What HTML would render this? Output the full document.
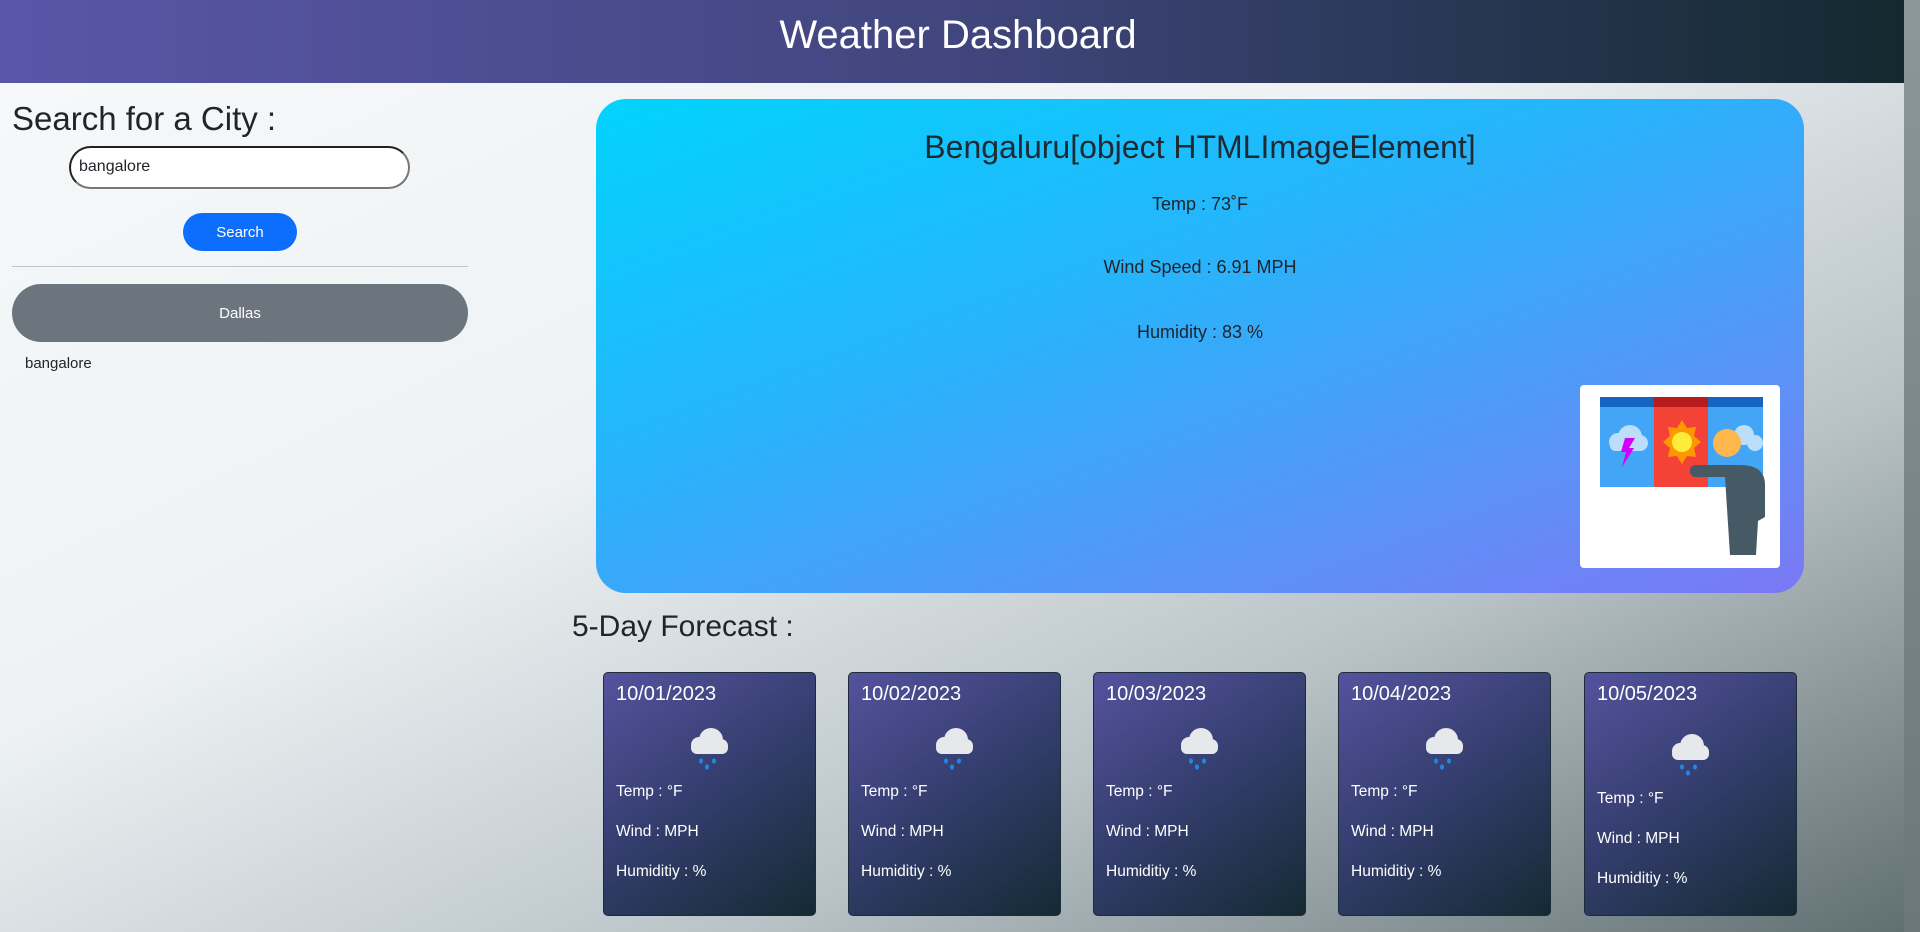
<!DOCTYPE html>
<html><head><meta charset="utf-8"><style>
*{margin:0;padding:0;box-sizing:border-box}
body{width:1920px;height:932px;overflow:hidden;position:relative;font-family:"Liberation Sans",sans-serif;background:linear-gradient(155deg,#f7f9fa 0%,#eef2f4 40%,#b9c3c7 70%,#5f6e71 100%);color:#212529}
.a{position:absolute}
#hdr{left:0;top:0;width:1904px;height:83px;background:linear-gradient(90deg,#5a56a8,#41467e 50%,#13292f);color:#fff;font-size:40px;text-align:center;line-height:70px;padding-left:12px}
#sb{left:1904px;top:0;width:16px;height:932px;background:linear-gradient(#8a979b,#6a777b)}
.c{display:flex;align-items:center;justify-content:center;text-align:center}
.card{width:213px;height:244px;border:1px solid #1c2c38;border-radius:5px;background:linear-gradient(145deg,#55529e,#333d6c 50%,#152a33);color:#fff;top:672px}
.card .d{position:absolute;left:12px;top:10px;font-size:20px}
.card .t{position:absolute;left:12px;font-size:15.5px}
.card svg{position:absolute;left:80px;top:50px}
</style></head><body>
<div id="hdr" class="a">Weather Dashboard</div>
<div id="sb" class="a"></div>
<div class="a" style="left:12px;top:100px;font-size:33px">Search for a City :</div>
<div class="a" style="left:69px;top:146px;width:341px;height:43px;border:2px solid #222;border-radius:22px;background:#fff;font-size:16px;padding:10px 0 0 8px;border-bottom-color:#777;border-right-color:#777">bangalore</div>
<div class="a c" style="left:183px;top:213px;width:114px;height:38px;background:#0d6efd;border-radius:19px;color:#fff;font-size:15px">Search</div>
<div class="a" style="left:12px;top:266px;width:456px;height:1px;background:#c0c4c8"></div>
<div class="a c" style="left:12px;top:284px;width:456px;height:58px;background:#6c757d;border-radius:29px;color:#fff;font-size:15px">Dallas</div>
<div class="a" style="left:25px;top:355px;font-size:15px">bangalore</div>

<div class="a" style="left:596px;top:99px;width:1208px;height:494px;border-radius:30px;background:linear-gradient(160deg,#02d3fd 0%,#27b4fb 40%,#5a93f8 75%,#7b78f4 100%)">
<div class="a" style="left:0;width:1208px;top:30px;text-align:center;font-size:32px;color:#1f2a33">Bengaluru[object HTMLImageElement]</div>
<div class="a" style="left:0;width:1208px;top:95px;text-align:center;font-size:18px">Temp : 73˚F</div>
<div class="a" style="left:0;width:1208px;top:158px;text-align:center;font-size:18px">Wind Speed : 6.91 MPH</div>
<div class="a" style="left:0;width:1208px;top:223px;text-align:center;font-size:18px">Humidity : 83 %</div>
<div class="a" style="left:984px;top:286px;width:200px;height:183px;background:#fff;border-radius:4px;overflow:hidden">
<svg width="200" height="183" viewBox="0 0 200 183">
<rect x="20" y="12" width="54" height="90" fill="#42a5f5"/><rect x="74" y="12" width="54" height="90" fill="#f44336"/><rect x="128" y="12" width="55" height="90" fill="#42a5f5"/>
<rect x="20" y="12" width="54" height="10" fill="#1565c0"/><rect x="74" y="12" width="54" height="10" fill="#b71c1c"/><rect x="128" y="12" width="55" height="10" fill="#1565c0"/>
<g fill="#bbdefb"><circle cx="38" cy="57" r="9"/><circle cx="50" cy="52" r="12"/><circle cx="60" cy="58" r="8"/><rect x="30" y="56" width="36" height="10" rx="5"/>
<circle cx="164" cy="50" r="10"/><circle cx="175" cy="58" r="8"/></g>
<polygon points="45,53 55,53 49,63 54,63 42,82 46,67 41,67" fill="#d500f9"/>
<polygon points="102,35 107,43 116,42 114,51 121,57 114,63 116,72 107,71 102,79 97,71 88,72 90,63 83,57 90,51 88,42 97,43" fill="#ff9800"/>
<circle cx="102" cy="57" r="10" fill="#ffeb3b"/>
<circle cx="147" cy="58" r="14" fill="#ffb74d"/>
<path d="M116 80 Q110 80 110 86 Q110 92 116 92 H145 L150 170 H176 L178 136 L185 132 V100 Q185 80 160 80 Z" fill="#455a64"/>
</svg></div>
</div>

<div class="a" style="left:572px;top:610px;font-size:30px">5-Day Forecast :</div>

<svg width="0" height="0" style="position:absolute"><defs><symbol id="rain" viewBox="0 0 52 52"><g fill="#e6e8eb"><circle cx="15" cy="22" r="8"/><circle cx="27" cy="17" r="12"/><circle cx="37" cy="23" r="7"/><rect x="7" y="19" width="37" height="12" rx="6"/></g><g fill="#1e88e5"><ellipse cx="17" cy="38" rx="2" ry="2.6"/><ellipse cx="30" cy="38" rx="2" ry="2.6"/><ellipse cx="23" cy="44" rx="2" ry="2.6"/></g></symbol></defs></svg>

<div class="a card" style="left:603px"><div class="d">10/01/2023</div><svg width="52" height="52"><use href="#rain"/></svg><div class="t" style="top:110px">Temp : °F</div><div class="t" style="top:150px">Wind : MPH</div><div class="t" style="top:190px">Humiditiy : %</div></div>
<div class="a card" style="left:848px"><div class="d">10/02/2023</div><svg width="52" height="52"><use href="#rain"/></svg><div class="t" style="top:110px">Temp : °F</div><div class="t" style="top:150px">Wind : MPH</div><div class="t" style="top:190px">Humiditiy : %</div></div>
<div class="a card" style="left:1093px"><div class="d">10/03/2023</div><svg width="52" height="52"><use href="#rain"/></svg><div class="t" style="top:110px">Temp : °F</div><div class="t" style="top:150px">Wind : MPH</div><div class="t" style="top:190px">Humiditiy : %</div></div>
<div class="a card" style="left:1338px"><div class="d">10/04/2023</div><svg width="52" height="52"><use href="#rain"/></svg><div class="t" style="top:110px">Temp : °F</div><div class="t" style="top:150px">Wind : MPH</div><div class="t" style="top:190px">Humiditiy : %</div></div>
<div class="a card" style="left:1584px"><div class="d">10/05/2023</div><svg width="52" height="52" style="top:56px"><use href="#rain"/></svg><div class="t" style="top:117px">Temp : °F</div><div class="t" style="top:157px">Wind : MPH</div><div class="t" style="top:197px">Humiditiy : %</div></div>
</body></html>
